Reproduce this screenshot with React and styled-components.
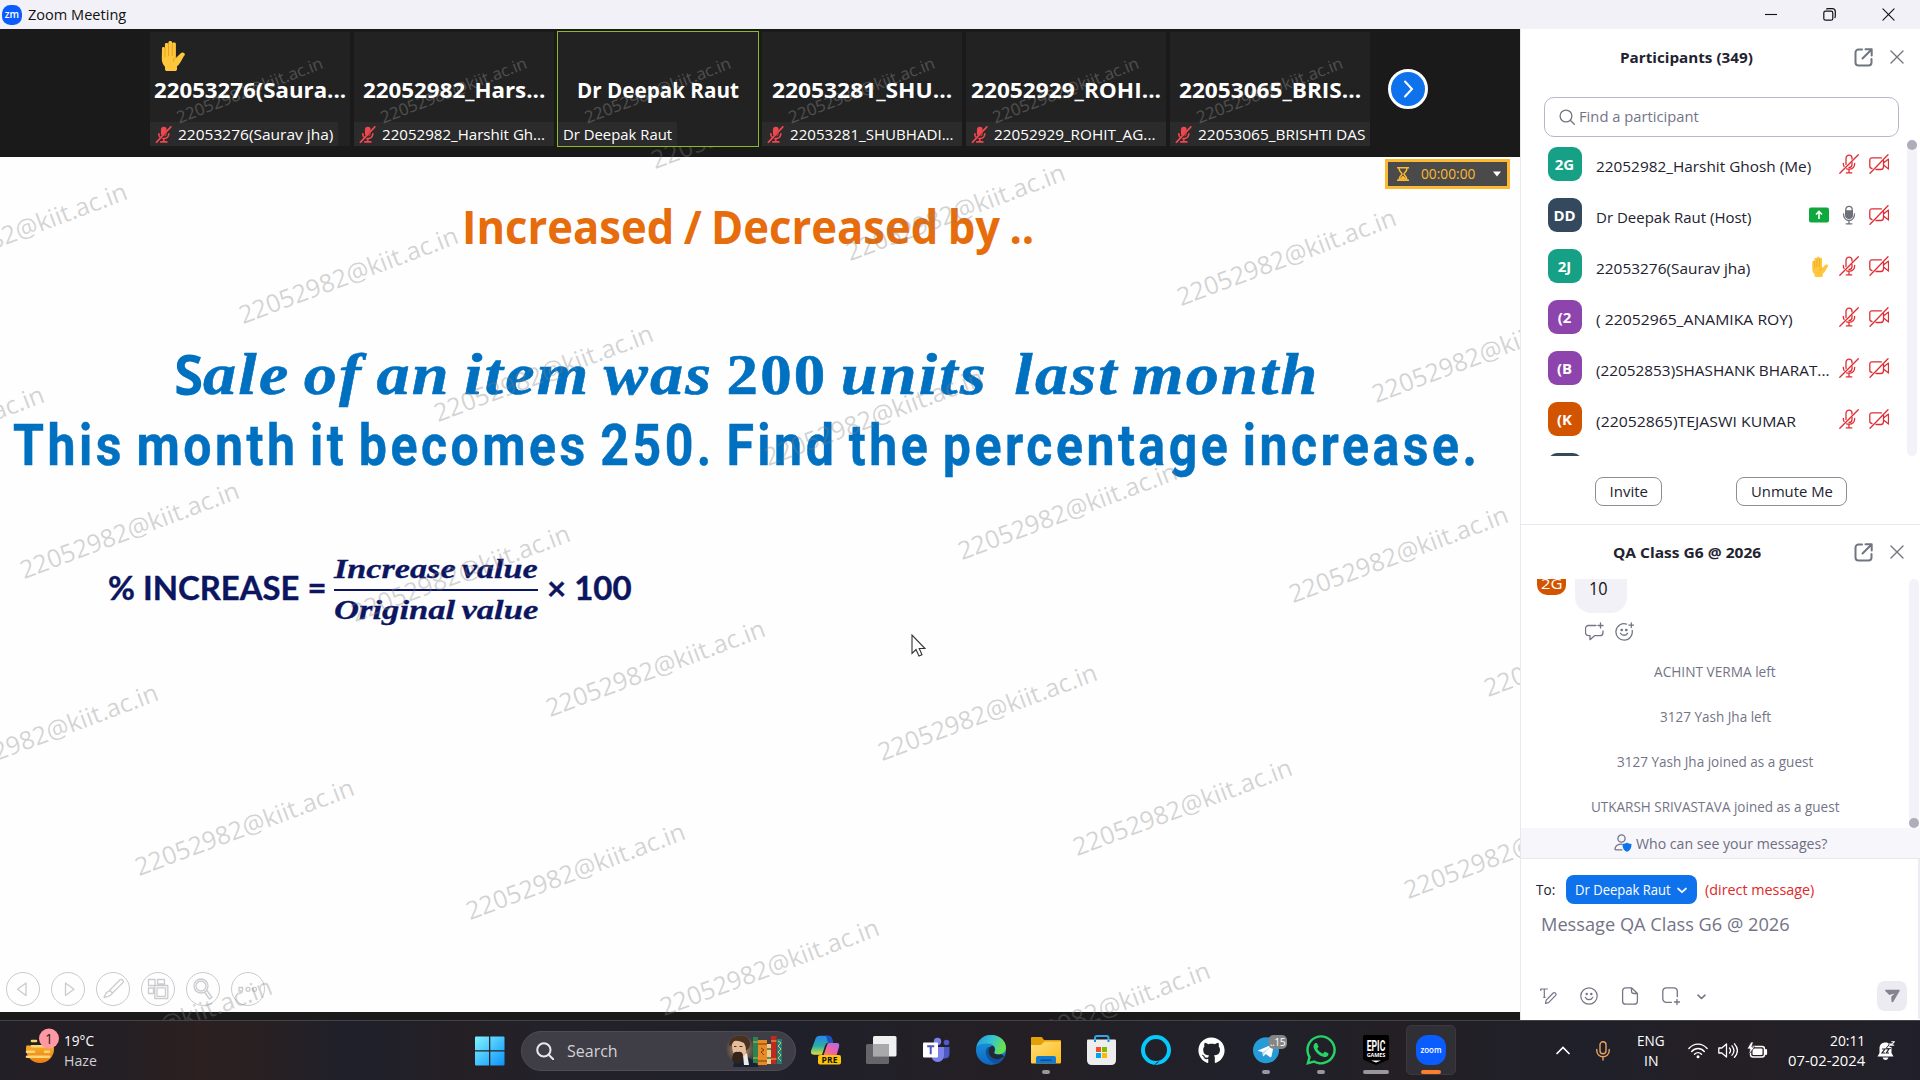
import React, { useLayoutEffect, useRef, useState } from "react";
import styled, { createGlobalStyle, css } from "styled-components";
import { FaGithub, FaWhatsapp } from "react-icons/fa";

const UI = `"Open Sans", "Noto Sans", sans-serif`;
const ACCOUNT = "22052982@kiit.ac.in";

const GlobalStyle = createGlobalStyle`
  * { box-sizing: border-box; }
  html, body { margin: 0; padding: 0; background: #1a1a1a; overflow: hidden; }
  body { font-family: ${UI}; color: #222230; }
  svg { display: block; flex: none; }
`;

/* ---------- text fitted to a fixed measure ---------- */

const FitBox = styled.span`
  display: block;
  flex: none;
  width: ${(p) => p.$w}px;
  height: ${(p) => p.$h || 20}px;
  line-height: ${(p) => p.$h || 20}px;
  font-family: ${(p) => p.$font || UI};
  font-size: ${(p) => p.$size || 15}px;
  font-weight: ${(p) => p.$weight || 400};
  font-style: ${(p) => (p.$italic ? "italic" : "normal")};
  letter-spacing: ${(p) => p.$track || 0}px;
  word-spacing: ${(p) => p.$words || 0}px;
  -webkit-text-stroke: ${(p) => (p.$stroke ? `${p.$stroke}px currentColor` : "0")};
  color: ${(p) => p.$color || "inherit"};
`;

const FitInner = styled.span`
  display: inline-block;
  white-space: pre;
  transform-origin: 0 50%;
`;

function Fit({ w, h, size, weight, italic, font, track, words, stroke, up = 0, color, children }) {
  const ref = useRef(null);
  const [scale, setScale] = useState(1);
  useLayoutEffect(() => {
    const natural = ref.current.offsetWidth - (track || 0);
    if (natural > 0) setScale(w / natural);
  }, [w, track, children]);
  return (
    <FitBox $w={w} $h={h} $size={size} $weight={weight} $italic={italic} $font={font} $track={track} $words={words} $stroke={stroke} $color={color}>
      <FitInner ref={ref} style={{ transform: `translateY(${-up}px) scaleX(${scale})` }}>{children}</FitInner>
    </FitBox>
  );
}

/* ---------- frame ---------- */

const Screen = styled.div`
  width: 1920px;
  height: 1080px;
  display: flex;
  flex-direction: column;
  overflow: hidden;
  background: #1a1a1a;
`;

const TitleBar = styled.header`
  height: 29px;
  flex: none;
  display: flex;
  align-items: center;
  background: #f3f1f8;
  color: #111;
  padding: 0 25px 0 2px;
  gap: 6px;
`;

const WindowButtons = styled.div`
  margin-left: auto;
  display: flex;
  align-items: center;
  gap: 46px;
`;

const Body = styled.div`
  height: 991px;
  flex: none;
  display: flex;
`;

const Main = styled.main`
  width: 1520px;
  flex: none;
  display: flex;
  flex-direction: column;
  position: relative;
  overflow: hidden;
`;

/* ---------- video strip ---------- */

const Strip = styled.section`
  height: 118px;
  margin-bottom: 10px;
  flex: none;
  display: flex;
  align-items: flex-start;
  padding: 3px 0 0 150px;
  background: #1a1a1a;
  gap: 4px;
  position: relative;
  z-index: 2;
`;

const Tile = styled.div`
  width: 200px;
  height: 114px;
  flex: none;
  display: flex;
  flex-direction: column;
  align-items: center;
  justify-content: flex-end;
  position: relative;
  background: #222222;
  outline: ${(p) => (p.$active ? "1px solid #86bd22" : "none")};
  color: #fff;
`;

const TileName = styled.div`
  height: 28px;
  margin-bottom: 18px;
`;

const TileLabel = styled.div`
  align-self: flex-start;
  width: ${(p) => p.$w}px;
  height: 24px;
  flex: none;
  display: flex;
  align-items: center;
  padding-left: 5px;
  gap: 6px;
  background: #2b2b2b;
`;

const TileHand = styled.div`
  position: absolute;
  left: 10px;
  top: 8px;
`;

const TileMark = styled.div`
  position: absolute;
  left: 22px;
  top: 47px;
  transform: rotate(-21deg);
  opacity: 0.2;
  pointer-events: none;
`;

const NextButton = styled.button`
  width: 40px;
  height: 40px;
  margin: 37px 0 0 14px;
  padding: 0;
  border: 3.5px solid #fff;
  border-radius: 50%;
  background: #0e72ed;
  display: flex;
  align-items: center;
  justify-content: center;
`;

/* ---------- shared slide ---------- */

const Slide = styled.section`
  height: 855px;
  flex: none;
  background: #fefefe;
  display: flex;
  flex-direction: column;
  position: relative;
`;

const Line = styled.div`
  height: ${(p) => p.$h}px;
  flex: none;
  margin-top: ${(p) => p.$top}px;
  padding-left: ${(p) => p.$left}px;
  display: flex;
  align-items: center;
`;

const Side = styled.div`
  padding-bottom: 4px;
  margin: 0 ${(p) => p.$r || 0}px 0 ${(p) => p.$l || 0}px;
`;

const Fraction = styled.div`
  display: flex;
  flex-direction: column;
  width: 204px;
`;

const FractionBar = styled.div`
  height: 2px;
  background: #0b1560;
`;

const SlideTools = styled.nav`
  margin-top: auto;
  display: flex;
  gap: 11.2px;
  padding: 0 0 6.5px 5.5px;
`;

const SlideTool = styled.span`
  width: 34px;
  height: 34px;
  border: 1.3px solid #cbcace;
  border-radius: 50%;
  display: flex;
  align-items: center;
  justify-content: center;
`;

const Timer = styled.div`
  position: absolute;
  left: 1385px;
  top: 2px;
  width: 125px;
  height: 30px;
  border: 3px solid #fdb930;
  background: #4a4a4a;
  display: flex;
  align-items: center;
  padding: 0 6px 0 9px;
  gap: 12px;
`;

const TimerArrow = styled.span`
  margin-left: auto;
`;

const WatermarkLayer = styled.div`
  position: absolute;
  inset: 0;
  overflow: hidden;
  pointer-events: none;
`;

const Watermark = styled.div`
  position: absolute;
  left: ${(p) => p.$x - 116}px;
  top: ${(p) => p.$y - 45.5}px;
  transform: rotate(-20.6deg);
  color: rgba(130, 130, 130, 0.34);
`;

const Pointer = styled.div`
  position: absolute;
  left: 911px;
  top: 605px;
`;

/* ---------- sidebar ---------- */

const Sidebar = styled.aside`
  width: 400px;
  flex: none;
  border-left: 1px solid #e9e8f0;
  background: #fff;
  display: flex;
  flex-direction: column;
`;

const PanelHead = styled.div`
  height: ${(p) => p.$h}px;
  flex: none;
  display: flex;
  align-items: center;
  padding: 0 16px 0 ${(p) => p.$left}px;
`;

const HeadActions = styled.div`
  margin-left: auto;
  display: flex;
  align-items: center;
  gap: 17px;
`;

const SearchField = styled.div`
  width: 355px;
  height: 40px;
  flex: none;
  margin: 12px 0 0 23px;
  border: 1px solid #b9b5cd;
  border-radius: 10px;
  display: flex;
  align-items: center;
  padding-left: 14px;
  gap: 4px;
`;

const Split = styled.div`
  display: flex;
  justify-content: space-between;
  flex: none;
  height: ${(p) => p.$h}px;
  margin-top: ${(p) => p.$top || 0}px;
  padding-right: ${(p) => p.$right}px;
`;

const ParticipantList = styled.div`
  width: 380px;
  padding: 7px 0 0 26.5px;
  overflow: hidden;
`;

const ParticipantRow = styled.div`
  width: 341.5px;
  height: 51px;
  display: flex;
  align-items: flex-start;
`;

const Avatar = styled.div`
  width: 34px;
  height: 34px;
  flex: none;
  border-radius: 9px;
  background: ${(p) => p.$bg};
  color: #fff;
  font-size: 15px;
  font-weight: 700;
  display: flex;
  align-items: center;
  justify-content: center;
`;

const RowName = styled.div`
  margin: 9px 0 0 14.5px;
  height: 20px;
`;

const RowIcons = styled.div`
  height: 34px;
  margin-left: auto;
  display: flex;
  align-items: center;
  gap: 10px;
`;

const Track = styled.div`
  width: 10px;
  border-radius: 5px;
  background: #f3f2f8;
  display: flex;
  flex-direction: column;
  justify-content: ${(p) => (p.$end ? "flex-end" : "flex-start")};
`;

const Thumb = styled.div`
  width: 10px;
  height: 10px;
  border-radius: 50%;
  background: #afadb9;
`;

const FooterButtons = styled.div`
  height: 69px;
  flex: none;
  display: flex;
  align-items: flex-start;
  padding: 21px 0 0 74px;
  gap: 74px;
  border-bottom: 1px solid #e9e8f0;
`;

const PillButton = styled.button`
  width: ${(p) => p.$w}px;
  height: 29px;
  padding: 0;
  border: 1px solid #8d8d92;
  border-radius: 8px;
  background: #fff;
  color: #222230;
  display: flex;
  align-items: center;
  justify-content: center;
`;

const ChatLog = styled.div`
  flex: 1;
  overflow: hidden;
  display: flex;
  flex-direction: column;
`;

const Message = styled.div`
  height: 34px;
  flex: none;
  display: flex;
  align-items: flex-end;
  padding-left: 16px;
  gap: 9px;
`;

const ChatAvatar = styled.div`
  width: 29px;
  height: 29px;
  flex: none;
  margin-bottom: 18px;
  border-radius: 10px;
  background: #d35400;
  color: #fff;
  display: flex;
  align-items: flex-end;
  justify-content: center;
  padding-bottom: 3px;
`;

const Bubble = styled.div`
  width: 52px;
  height: 60px;
  border-radius: 16px;
  background: #f2f1f7;
  color: #111;
  display: flex;
  align-items: flex-end;
  padding: 0 0 13px 13.5px;
`;

const Reactions = styled.div`
  height: 37px;
  flex: none;
  display: flex;
  align-items: center;
  padding-left: 64px;
  gap: 11px;
`;

const Notices = styled.div`
  display: flex;
  flex-direction: column;
  align-items: center;
  gap: 25px;
  padding-top: 12px;
  color: #747487;
`;

const WhoBand = styled.div`
  height: 31px;
  flex: none;
  display: flex;
  align-items: center;
  padding-left: 93px;
  gap: 4px;
  background: #f7f6fb;
  border-bottom: 1px solid #e9e8f0;
  color: #6e6e80;
`;

const Composer = styled.div`
  height: 160px;
  flex: none;
  border-right: 2px solid #edecf4;
  display: flex;
  flex-direction: column;
`;

const ToRow = styled.div`
  display: flex;
  align-items: center;
  height: 29px;
  margin-top: 16px;
  padding-left: 15px;
`;

const Recipient = styled.div`
  width: 131px;
  height: 29px;
  margin: 0 8px 0 11px;
  padding: 0 10px 0 9px;
  border-radius: 8px;
  background: #0e72ed;
  color: #fff;
  display: flex;
  align-items: center;
  justify-content: space-between;
`;

const Placeholder = styled.div`
  padding: 7px 0 0 20px;
  color: #747487;
`;

const ComposerTools = styled.div`
  display: flex;
  align-items: center;
  height: 30px;
  margin: auto 11px 8px 0;
  padding-left: 18px;
`;

const ToolSlot = styled.span`
  width: ${(p) => p.$w || 41}px;
`;

const SendButton = styled.span`
  width: 30px;
  height: 30px;
  margin-left: auto;
  border-radius: 8px;
  background: #ecebf1;
  display: flex;
  align-items: center;
  justify-content: center;
`;

/* ---------- taskbar ---------- */

const Taskbar = styled.footer`
  height: 60px;
  flex: none;
  display: flex;
  align-items: stretch;
  border-top: 1px solid #434247;
  color: #fff;
  background: linear-gradient(90deg, #231f26 0, #241f24 120px, #2c2020 200px, #272023 270px, #1f202b 350px, #241f25 460px, #23222a 560px, #20202a 800px, #241f24 1010px, #20212b 1260px, #231f24 1390px, #20202a 1600px, #241f24 1720px, #21202a 1920px);
`;

const Weather = styled.div`
  width: 475px;
  display: flex;
  align-items: center;
  padding-left: 24px;
  gap: 4px;
`;

const Stack = styled.div`
  display: flex;
  flex-direction: column;
  align-items: ${(p) => p.$align || "flex-start"};
  justify-content: center;
`;

const Start = styled.div`
  width: 46px;
  display: flex;
  align-items: center;
`;

const SearchPill = styled.div`
  width: 275px;
  height: 40px;
  align-self: center;
  border-radius: 20px;
  background: #3f3d45;
  border: 1px solid #4e4c54;
  color: #d3d2d6;
  display: flex;
  align-items: center;
  padding: 0 11px 0 14px;
`;

const SearchLabel = styled.span`
  margin-left: 13px;
`;

const SearchArt = styled.span`
  margin-left: auto;
`;

const Apps = styled.div`
  display: flex;
  padding-left: 2.5px;
`;

const AppSlot = styled.div`
  width: 55px;
  display: flex;
  flex-direction: column;
  align-items: center;
`;

const AppFace = styled.div`
  width: 50px;
  height: 50px;
  margin-top: 4px;
  border-radius: 5px;
  display: flex;
  align-items: center;
  justify-content: center;
  ${(p) => p.$active && css`
    background: #312f36;
    border: 1px solid #3b393f;
  `}
`;

const Indicator = styled.div`
  width: ${(p) => p.$w}px;
  height: 4px;
  margin-top: -5px;
  border-radius: 2px;
  background: ${(p) => p.$bg || "#98979c"};
`;

const Tray = styled.div`
  margin-left: auto;
  padding-right: 25px;
  display: flex;
  align-items: center;
`;

const TraySlot = styled.div`
  width: ${(p) => p.$w}px;
  display: flex;
  justify-content: center;
`;

/* ---------- icons ---------- */

const ZoomMark = () => (
  <svg width="20" height="20" viewBox="0 0 20 20">
    <rect width="20" height="20" rx="8.5" fill="#0b5cff" />
    <text x="10" y="13.4" fontFamily="Open Sans" fontWeight="600" fontSize="10" fill="#fff" textAnchor="middle">zm</text>
  </svg>
);

const HandIcon = ({ w = 26, h = 31 }) => (
  <svg width={w} height={h} viewBox="0 0 26 31" preserveAspectRatio="none">
    <path d="M2 8.2c0-1.6 2.8-1.6 2.9 0V4.4c0-1.8 3.4-1.8 3.5 0V2.5c0-2 3.7-2 3.8 0v1.4c.1-1.9 3.6-1.9 3.7 0V18l4.6-4.6c1.7-1.7 4.9-.6 4.3 1.6-2.8 3.2-3.9 8.500-7.800 11.300v2.900c0 1-.9 1.800-2 1.800H7c-1.200 0-2-.8-2-1.800v-2.400C2.800 24.600 1.700 22 1.800 18Z" fill="#ffc63c" />
    <path d="M5 8v8.500M8.500 4.500v11M12.200 4.500v11.200M15.900 17c-1.700.8-2.600 2.200-2.700 4.200" stroke="#e6a01f" strokeWidth="1" fill="none" strokeLinecap="round" />
  </svg>
);

const TileMicOff = () => (
  <svg width="17" height="17" viewBox="0 0 17 17" fill="none" stroke="#f0474f" strokeLinecap="round">
    <rect x="5.900" y=".8" width="5.800" height="9.400" rx="2.900" fill="#f0474f" stroke="none" />
    <path d="M3.800 7.800c0 6.400 10 6.400 10 0M8.800 12.600V15.600M5.800 15.900h6" strokeWidth="1.700" />
    <path d="M15.200 1.600 2.600 16.400" stroke="#2b2b2b" strokeWidth="2" />
    <path d="M15.800.8 1.400 16.300" strokeWidth="1.700" />
  </svg>
);

const MicOff = () => (
  <svg width="20" height="20" viewBox="0 0 20 20" fill="none" stroke="#e02d33" strokeWidth="1.300" strokeLinecap="round">
    <path d="M7 10.500V4.200c0-4 6-4 6 0v.8M13 8.500v2c0 2-1.400 3-3 3" />
    <path d="M4.300 9.300c0 1.300.2 2.300.8 3.200M15.700 9.300c0 4-2.700 5.900-5.700 5.900-.9 0-1.700-.1-2.400-.4M10 15.200v3.500M7.300 18.900h5.500" />
    <path d="M.8 19.200 19.300.8" />
  </svg>
);

const MicOn = () => (
  <svg width="20" height="20" viewBox="0 0 20 20" fill="none" stroke="#6e7079" strokeWidth="1.300" strokeLinecap="round">
    <rect x="6.800" y="1.300" width="6.400" height="12" rx="3.200" />
    <path d="M6.800 6h6.400v4.100a3.200 3.200 0 0 1-6.400 0Z" fill="#6e7079" />
    <path d="M4.500 8.800c0 8.900 11 8.900 11 0M10 15.500v3M7.200 18.800h5.600" />
  </svg>
);

const CamOff = () => (
  <svg width="20" height="20" viewBox="0 0 20 20" fill="none" stroke="#e02d33" strokeWidth="1.300" strokeLinecap="round" strokeLinejoin="round">
    <path d="M3 14.500C1.200 14.300.8 13.600.8 12.300V6C.8 4.500 1.500 3.800 3 3.800h9.500M14.500 6.500v6c0 2-.8 3-2.600 3H7M14.500 9l5-3.900v9.900l-5-3.900" />
    <path d="M1 19.300 19 .8" />
  </svg>
);

const ShareBadge = () => (
  <svg width="20" height="20" viewBox="0 0 20 20">
    <rect y="2.500" width="20" height="15" rx="2" fill="#0fa83c" />
    <path d="M10 14V7M7 9.500l3-3 3 3" stroke="#fff" strokeWidth="1.600" fill="none" />
  </svg>
);

const PopOut = () => (
  <svg width="19" height="19" viewBox="0 0 19 19" fill="none" stroke="#6f7680" strokeWidth="2" strokeLinecap="round" strokeLinejoin="round">
    <path d="M8 1.500H4.500a3 3 0 0 0-3 3v10a3 3 0 0 0 3 3h10a3 3 0 0 0 3-3V11M11.500 1.300h6.200v6.200M17.300 1.700 8.500 10.500" />
  </svg>
);

const Cross = ({ s = 14, c = "#74747f", sw = 1.4 }) => (
  <svg width={s} height={s} viewBox="0 0 14 14" fill="none" stroke={c} strokeWidth={sw} strokeLinecap="round">
    <path d="m1 1 12 12M13 1 1 13" />
  </svg>
);

const Glass = ({ s = 16, c = "#74747f", sw = 1.300 }) => (
  <svg width={s} height={s} viewBox="0 0 16 16" fill="none" stroke={c} strokeWidth={sw} strokeLinecap="round">
    <circle cx="7" cy="7" r="5.900" />
    <path d="m11.300 11.300 4 4" />
  </svg>
);

const ChevronDown = ({ w = 9, c = "#747487" }) => (
  <svg width={w} height={w} viewBox="0 0 9 9" fill="none" stroke={c} strokeWidth="1.600" strokeLinecap="round" strokeLinejoin="round">
    <path d="m1 3.200 3.500 3.300L8 3.200" />
  </svg>
);

const ReplyPlus = () => (
  <svg width="19" height="19" viewBox="0 0 19 19" fill="none" stroke="#747487" strokeWidth="1.300" strokeLinecap="round" strokeLinejoin="round">
    <path d="M11 3.500H3.500a3 3 0 0 0-3 3v4.200a3 3 0 0 0 3 3H5v4l4.500-4H15a3 3 0 0 0 3-3V9M15.500 1v5M13 3.500h5" />
  </svg>
);

const SmilePlus = () => (
  <svg width="19" height="19" viewBox="0 0 19 19" fill="none" stroke="#747487" strokeWidth="1.300" strokeLinecap="round">
    <path d="M11.500 2.100a8.200 8.200 0 1 0 5.700 6.400M5.500 11.300c1.500 2.600 5.400 2.600 7 0M16.300.8v4.800M13.900 3.200h4.800" />
    <circle cx="6.700" cy="8" r=".7" fill="#747487" />
    <circle cx="11.300" cy="8" r=".7" fill="#747487" />
  </svg>
);

const WhoIcon = () => (
  <svg width="18" height="18" viewBox="0 0 18 18" fill="none" stroke="#747487" strokeWidth="1.300" strokeLinecap="round">
    <circle cx="7.500" cy="4.500" r="3.600" />
    <path d="M8 10.200c-4 0-6.500 1.300-7 4.600-.1.700.3 1 .9 1H8" />
    <path d="M13 8.500c1.300 1 2.700 1.400 4.500 1.400 0 3.800-1 6.300-4.500 7.900-3.500-1.600-4.500-4.100-4.500-7.900 1.800 0 3.200-.4 4.500-1.400Z" fill="#0e72ed" stroke="none" />
  </svg>
);

const FormatIcon = () => (
  <svg width="18" height="18" viewBox="0 0 18 18" fill="none" stroke="#747487" strokeWidth="1.200" strokeLinejoin="round">
    <path d="M1.800 4V2h7M5.300 2v8M4.300 10.300h2.200M6.500 16.500l.7-3.300 7-7.200c1.600-1.300 3.700.7 2.400 2.400l-7 7.200Z" />
  </svg>
);

const SmileIcon = () => (
  <svg width="18" height="18" viewBox="0 0 18 18" fill="none" stroke="#747487" strokeWidth="1.200" strokeLinecap="round">
    <circle cx="9" cy="9" r="8.200" />
    <path d="M5.300 10.300c1.500 3.200 6 3.200 7.500 0" />
    <circle cx="6.700" cy="7" r=".6" fill="#747487" />
    <circle cx="11.300" cy="7" r=".6" fill="#747487" />
  </svg>
);

const FileIcon = () => (
  <svg width="18" height="18" viewBox="0 0 18 18" fill="none" stroke="#747487" strokeWidth="1.300" strokeLinejoin="round">
    <path d="M10.500.8H4.600a3 3 0 0 0-3 3v10.400a3 3 0 0 0 3 3h8.800a3 3 0 0 0 3-3V6.500Zm0 0v3.200c0 1.700.8 2.500 2.500 2.500h3.400" />
  </svg>
);

const ShotIcon = () => (
  <svg width="18" height="18" viewBox="0 0 18 18" fill="none" stroke="#747487" strokeWidth="1.300" strokeLinecap="round">
    <path d="M9.500 15.300H4.300a3.500 3.500 0 0 1-3.500-3.500V4.300A3.500 3.500 0 0 1 4.300.8h7.500a3.500 3.500 0 0 1 3.500 3.500v5.400M15 12.500v5M12.500 15h5" />
  </svg>
);

const SendIcon = () => (
  <svg width="15" height="14" viewBox="0 0 15 14">
    <path d="M.5.800h13.800c.5 0 .7.500.4 1L8.300 12.700c-.5.800-1.700.7-1.800-.3L6.200 7.700 9.500 4.600 4.300 6 .3 1.900C-.1 1.400 0 .8.500.8Z" fill="#85838f" />
  </svg>
);

const HazeIcon = () => (
  <svg width="36" height="46" viewBox="0 0 36 46">
    <defs>
      <linearGradient id="sun" x1="0" y1="0" x2="0" y2="1"><stop offset="0" stopColor="#f9c63c" /><stop offset="1" stopColor="#ee7e14" /></linearGradient>
    </defs>
    <circle cx="16" cy="21" r="14" fill="url(#sun)" />
    <path d="M0 0h30v17.500H0Z" fill="#241f25" />
    <path d="M8 13h4M8 18.300h20M3 23.800h7M21 23.800h4M3 28.800h22" stroke="#f8d774" strokeWidth="2.600" strokeLinecap="round" />
    <circle cx="25" cy="10.500" r="10" fill="#ff98a2" />
    <text x="25" y="15.500" fontFamily="Open Sans" fontSize="14" fill="#222" textAnchor="middle">1</text>
  </svg>
);

const WindowsLogo = () => (
  <svg width="30" height="30" viewBox="0 0 30 30">
    <defs><linearGradient id="win" x1="0" y1="0" x2="1" y2="1"><stop offset="0" stopColor="#7ff3ff" /><stop offset="1" stopColor="#0b93fb" /></linearGradient></defs>
    <path d="M0 1.500Q0 .5 1 .5H14V14.300H0ZM15.300.5H28.500q1 0 1 1V14.300H15.300ZM0 15.600H14V29.500H1q-1 0-1-1ZM15.300 15.600H29.500V28.500q0 1-1 1H15.300Z" fill="url(#win)" />
  </svg>
);

const DickensArt = () => (
  <svg width="58" height="32" viewBox="0 0 58 32">
    <defs><radialGradient id="halo"><stop offset=".5" stopColor="#8a6c52" /><stop offset="1" stopColor="#8a6c52" stopOpacity="0" /></radialGradient></defs>
    <circle cx="14.500" cy="14" r="15" fill="url(#halo)" />
    <path d="M7 32q1-8 9-12 11 3 17 12Z" fill="#182133" />
    <path d="m17 20 4-2 2 12h-5Z" fill="#edebe6" />
    <path d="M6 9q3-7 11-6 6 3 5 9l-3 8q-4 4-8 3-5-4-5-14Z" fill="#e5bd9b" />
    <path d="M3 9q1-7 9-8 8-1 11 4 2 4 0 8l-3 3q0-5-2-8-6-3-10-2-2 2-3 5-2 0-2-2Z" fill="#49301f" />
    <path d="M7 19q2-3 5-2 4-1 5 3 0 6-4 9-6 0-7-5Z" fill="#33231a" />
    <path d="M8 11.500h2.500M13.500 11.500h3" stroke="#49301f" strokeWidth="1.200" />
    <rect x="27" y="2" width="5" height="26" fill="#2b8350" />
    <path d="M27 7h5M27 23h5" stroke="#d8b44a" />
    <rect x="32" y="5" width="9" height="25" fill="#e98a24" />
    <path d="M32 9h9M32 26h9M35 13l3 2-3 2 3 3" stroke="#7e3a10" fill="none" />
    <rect x="41" y="9" width="4" height="20" fill="#e8cf90" />
    <path d="M41 14h4M41 23h4" stroke="#2b7750" strokeWidth="1.500" />
    <rect x="45" y="1" width="5.500" height="28" fill="#c2291d" />
    <path d="M45 6h5.500M45 24h5.500" stroke="#f0b650" strokeWidth="1.200" />
    <path d="M53.500 4v25" stroke="#1d7d78" strokeWidth="5" />
    <path d="m52 6 3 2-3 3 3 3-3 3 3 3-3 3 3 3" stroke="#dbbd62" fill="none" />
  </svg>
);

const CopilotIcon = () => (
  <svg width="30" height="30" viewBox="0 0 30 30">
    <defs>
      <linearGradient id="cpa" x1="0" y1="0" x2="0" y2="1"><stop offset="0" stopColor="#2b83ee" /><stop offset=".55" stopColor="#27b0a3" /><stop offset="1" stopColor="#e6dc3c" /></linearGradient>
      <linearGradient id="cpb" x1="1" y1="0" x2="0" y2="1"><stop offset="0" stopColor="#a66cf0" /><stop offset=".5" stopColor="#ee62a9" /><stop offset="1" stopColor="#fa8a4d" /></linearGradient>
    </defs>
    <path d="M5 2.500Q6 .7 9 .7h8q3 0 4 3l1 4h-5q-2 0-3 3l-3 9H3q-4 0-3-4Z" fill="url(#cpa)" />
    <path d="M15 .7h3q2 0 3 3l1 4h-5Z" fill="#1555bd" />
    <path d="M18 8h8q3 0 2 4l-3 10H12l4-12q.5-2 2-2Z" fill="url(#cpb)" />
    <rect x="7" y="20" width="23" height="9.500" rx="2" fill="#fdc50a" />
    <text x="18.500" y="28" fontFamily="Open Sans" fontWeight="700" fontSize="8.500" fill="#111" textAnchor="middle" textLength="16">PRE</text>
  </svg>
);

const TaskViewIcon = () => (
  <svg width="31" height="30" viewBox="0 0 31 30">
    <rect x="7" y="1" width="23.500" height="20.500" rx="1.500" fill="#f0f0f1" />
    <rect x="0" y="9" width="23" height="20" rx="1.500" fill="#707073" opacity=".88" />
    <rect x="7" y="9" width="16" height="12.500" fill="#a9a9ab" />
  </svg>
);

const TeamsIcon = () => (
  <svg width="27" height="26" viewBox="0 0 27 26">
    <circle cx="14.500" cy="4.500" r="3.700" fill="#7b83eb" />
    <circle cx="23.500" cy="5.500" r="2.800" fill="#5059c9" />
    <path d="M18 10h8.500v7q0 4-4.500 4.500h-4Z" fill="#5059c9" />
    <path d="M9 10h12v9q-1 6-7 6-4-.5-5-4Z" fill="#7b83eb" />
    <rect x="0" y="5.500" width="15" height="15" rx="1" fill="#fff" />
    <path d="M4.200 9.300h7M7.700 9.300v8" stroke="#4b53bc" strokeWidth="2" />
  </svg>
);

const EdgeIcon = () => (
  <svg width="30" height="30" viewBox="0 0 30 30">
    <defs>
      <linearGradient id="ea" x1="0" y1="0" x2="1" y2=".3"><stop offset="0" stopColor="#1e9be2" /><stop offset=".55" stopColor="#35c3cf" /><stop offset="1" stopColor="#6be04f" /></linearGradient>
      <linearGradient id="eb" x1="0" y1="0" x2="0" y2="1"><stop offset="0" stopColor="#1b9de2" /><stop offset="1" stopColor="#0f66bf" /></linearGradient>
    </defs>
    <circle cx="15" cy="15" r="15" fill="url(#eb)" />
    <path d="M.4 12C2 4.500 8 0 15 0c9 0 15 6 15 12.500 0 4-3 6.800-7.200 6.800-3.300 0-5.200-1-4.500-2.300 2.800-4-1-8.500-6.300-8.500C7 8 2.500 9 .4 12Z" fill="url(#ea)" />
    <path d="M12 12q-4 4-1 10 4 6 10 7 5-2 7-6.500-5 2.500-10 1-5-2-5.500-6.500-.5-3 1.500-5Z" fill="#11529c" />
    <path d="M18.300 17c1.200-2 .7-4.500-1.300-6.300-3 0-4.800 3-4.500 6.300.5 3.500 3 6 6.500 7 4 .5 7-.5 9.300-2.700l-3-2.300c-4 1.300-8 0-7-2Z" fill="#241f26" opacity=".9" />
  </svg>
);

const ExplorerIcon = () => (
  <svg width="30" height="28" viewBox="0 0 30 28">
    <defs><linearGradient id="fo" x1="0" y1="0" x2="1" y2="1"><stop offset="0" stopColor="#ffdf79" /><stop offset="1" stopColor="#fcba1c" /></linearGradient></defs>
    <path d="M0 2Q0 1 1 1h9q1 0 1.500.7L13 4h16q1 0 1 1v6H0Z" fill="#e3a008" />
    <path d="M0 9h10l3.500-3.500H30V26.500q0 1-1 1H1q-1 0-1-1Z" fill="url(#fo)" />
    <path d="M5 27.500V22q0-2 2-2h16q2 0 2 2v5.500Z" fill="#1179cf" />
    <path d="M10 24.300h10" stroke="#0a4f94" strokeWidth="1.600" strokeLinecap="round" />
  </svg>
);

const StoreIcon = () => (
  <svg width="29" height="30" viewBox="0 0 29 30">
    <path d="M8 7V3q0-2 2-2h9.500q2 0 2 2v4" fill="none" stroke="#29a9ea" strokeWidth="2" />
    <path d="M0 5.500q0-1 1-1h27q1 0 1 1V25q0 5-5 5H5q-5 0-5-5Z" fill="#ededee" />
    <rect x="9" y="12" width="5" height="5" fill="#f25022" /><rect x="15" y="12" width="5" height="5" fill="#7fba00" />
    <rect x="9" y="18" width="5" height="5" fill="#00a4ef" /><rect x="15" y="18" width="5" height="5" fill="#ffb900" />
    <path d="M8 4.500v2.500M21.500 4.500v2.500" stroke="#1688c9" strokeWidth="2" />
  </svg>
);

const AlexaIcon = () => (
  <svg width="30" height="30" viewBox="0 0 30 30">
    <circle cx="15" cy="15" r="13" fill="none" stroke="#05c8fd" strokeWidth="4" />
    <path d="M12.500 30V26.500q1.500.8 5 0L13.500 30Z" fill="#05c8fd" />
    <path d="M13.500 30q1-1.500 4-3.200" stroke="#241f26" strokeWidth="1" fill="none" />
  </svg>
);

const TelegramIcon = () => (
  <svg width="44" height="30" viewBox="0 0 44 30">
    <circle cx="22" cy="15.300" r="13" fill="#259bd8" />
    <path d="m13.500 15.800 15-6.500q1.500-.5 1.300 1L27.500 21.300q-.4 1.500-1.700.6l-4-3-2 2q-1 .8-1-.6l-.5-3.300Z" fill="#fff" />
    <path d="m18.500 17.300 8-5.500-6 6-.6 3Z" fill="#b9d8ee" />
    <rect x="24.500" y="0" width="18.500" height="14" rx="5" fill="#858587" />
    <text x="33.800" y="11" fontFamily="Open Sans" fontSize="10.500" fill="#fff" textAnchor="middle" textLength="16">..15</text>
  </svg>
);

const EpicIcon = () => (
  <svg width="26" height="30" viewBox="0 0 26 30">
    <path d="M0 1.500Q0 0 1.500 0h23Q26 0 26 1.500V24.500L13 30 0 24.500Z" fill="#000" />
    <text x="13" y="15.500" fontFamily="Roboto" fontWeight="700" fontSize="15" fill="#fff" textAnchor="middle" textLength="18.500" lengthAdjust="spacingAndGlyphs">EPIC</text>
    <text x="13" y="22" fontFamily="Open Sans" fontWeight="700" fontSize="5.500" fill="#fff" textAnchor="middle" textLength="18.500">GAMES</text>
    <path d="M8 25.500h10l-5 2Z" fill="#fff" />
  </svg>
);

const ZoomApp = () => (
  <svg width="30" height="30" viewBox="0 0 30 30">
    <rect width="30" height="30" rx="12" fill="#0b5cff" />
    <text x="15" y="17.800" fontFamily="Open Sans" fontWeight="600" fontSize="8.500" fill="#fff" textAnchor="middle" textLength="21" lengthAdjust="spacingAndGlyphs">zoom</text>
  </svg>
);

const TrayMic = () => (
  <svg width="14" height="20" viewBox="0 0 14 20" fill="none" stroke="#e6a261" strokeWidth="1.400" strokeLinecap="round">
    <rect x="4" y=".8" width="6" height="12" rx="3" />
    <path d="M.8 8.500v1.300c0 3.400 2.800 6 6.200 6s6.200-2.600 6.200-6V8.500M7 16v3" />
  </svg>
);

const Wifi = () => (
  <svg width="20" height="16" viewBox="0 0 20 16" fill="none" stroke="#fff" strokeWidth="1.400" strokeLinecap="round">
    <path d="M.9 5.500c5-5.900 13.200-5.900 18.200 0M3.700 8.500c3.500-4 9.100-4 12.600 0M6.500 11.300c2-2.200 5-2.200 7 0" />
    <circle cx="10" cy="13.800" r="1.500" fill="#fff" stroke="none" />
  </svg>
);

const Volume = () => (
  <svg width="20" height="17" viewBox="0 0 20 17" fill="none" stroke="#fff" strokeWidth="1.300" strokeLinecap="round" strokeLinejoin="round">
    <path d="M.8 6v5h3L8.500 15V2L3.800 6ZM11.500 6c1.300 1.600 1.300 3.500 0 5M14 3.800c2.500 3 2.500 6.500 0 9.400M16.500 1.800c3.600 4.200 3.600 9.300 0 13.400" />
  </svg>
);

const Battery = () => (
  <svg width="21" height="18" viewBox="0 0 21 18">
    <rect x="3.500" y="4.500" width="14" height="10.500" rx="2.500" fill="none" stroke="#fff" strokeWidth="1.400" />
    <rect x="5.500" y="6.500" width="10" height="6.500" rx="1" fill="#fff" />
    <path d="M19 8v4" stroke="#fff" strokeWidth="2.200" strokeLinecap="round" />
    <path d="M4 0 0 7h3l-1.500 5.500L8 5H4.800L6.500 0Z" fill="#fff" stroke="#22202a" strokeWidth=".8" />
  </svg>
);

const BellZ = () => (
  <svg width="18" height="20" viewBox="0 0 18 20">
    <path d="M2.500 7.500C2.500 3.500 5 1.500 8.500 1.500S14.500 3.500 14.500 7.500V12l2 3.500H.5l2-3.500Z" fill="#fff" />
    <path d="M5.500 16.500h6q-1 2.500-3 2.500t-3-2.500Z" fill="#fff" />
    <path d="M5 8h3l-3 4h3M9.300 8h2.700l-2.700 4H12" fill="none" stroke="#24222a" strokeWidth="1.200" />
    <path d="M11 3h3l-3 3.500h3M14.300.8h2.900l-2.900 3.400h2.900" fill="none" stroke="#24222a" strokeWidth="2.600" />
    <path d="M11 3h3l-3 3.500h3M14.300.8h2.900l-2.900 3.400h2.900" fill="none" stroke="#fff" strokeWidth="1.100" />
  </svg>
);

const slideStroke = { fill: "none", stroke: "#cbcace", strokeWidth: 1.3, strokeLinejoin: "round" };
const SLIDE_TOOLS = [
  <svg key="prev" width="22" height="22" viewBox="0 0 22 22" {...slideStroke}><path d="M14 5v12.500L5.500 11.300Z" /></svg>,
  <svg key="next" width="22" height="22" viewBox="0 0 22 22" {...slideStroke}><path d="M8.500 5v12.500L17 11.300Z" /></svg>,
  <svg key="pen" width="22" height="22" viewBox="0 0 22 22" {...slideStroke}><path d="M7.500 12.500 18 1.800c1.800-1 4 .8 3 2.800L10.500 15ZM7.500 12.500l3 2.500c-1.500 3-4.500 3.800-8.500 4.500l2-4.500Z" /></svg>,
  <svg key="grid" width="22" height="22" viewBox="0 0 22 22" {...slideStroke}><path d="M1.500 1.500H8v6H1.500ZM10.500 1.500h7V6h-7ZM1.500 10h5v5.500h-5ZM7.800 7.500h13V20.500h-13ZM10 9.800h8.500v8.500H10Z" /></svg>,
  <svg key="zoom" width="22" height="22" viewBox="0 0 22 22" {...slideStroke}><circle cx="9" cy="8" r="7" /><circle cx="9" cy="8" r="5" /><path d="m12.500 14 5 7 2.500-1.500-5-7" /></svg>,
  <svg key="more" width="22" height="22" viewBox="0 0 22 22" {...slideStroke}><rect x="2" y="9.500" width="3.500" height="3.500" /><circle cx="11" cy="11.300" r="2" /><circle cx="17.500" cy="11.300" r="2" /></svg>,
];

/* ---------- data ---------- */

const TILES = [
  { name: "22053276(Saura...", nameW: 192, label: "22053276(Saurav jha)", labelW: 155, box: 188, hand: true },
  { name: "22052982_Hars...", nameW: 182, label: "22052982_Harshit Gh...", labelW: 163, box: 200 },
  { name: "Dr Deepak Raut", nameW: 162, label: "Dr Deepak Raut", labelW: 109, box: 119, plain: true, active: true },
  { name: "22053281_SHU...", nameW: 180, label: "22053281_SHUBHADI...", labelW: 164, box: 200 },
  { name: "22052929_ROHI...", nameW: 190, label: "22052929_ROHIT_AG...", labelW: 161, box: 200 },
  { name: "22053065_BRIS...", nameW: 182, label: "22053065_BRISHTI DAS", labelW: 168, box: 200 },
];

const PEOPLE = [
  { init: "2G", bg: "#16a085", name: "22052982_Harshit Ghosh (Me)", w: 215 },
  { init: "DD", bg: "#34495e", name: "Dr Deepak Raut (Host)", w: 155, host: true },
  { init: "2J", bg: "#16a085", name: "22053276(Saurav jha)", w: 154, hand: true },
  { init: "(2", bg: "#8e44ad", name: "( 22052965_ANAMIKA ROY)", w: 197 },
  { init: "(B", bg: "#8e44ad", name: "(22052853)SHASHANK BHARAT...", w: 233 },
  { init: "(K", bg: "#d35400", name: "(22052865)TEJASWI KUMAR", w: 200 },
];

const NOTICES = [
  ["ACHINT VERMA left", 122],
  ["3127 Yash Jha left", 111],
  ["3127 Yash Jha joined as a guest", 196],
  ["UTKARSH SRIVASTAVA joined as a guest", 248],
];

const MARKS = [
  [760, 118], [955, 210], [1286, 255], [1481, 352],
  [17, 229], [348, 273], [543, 371], [873, 415], [1067, 509], [1398, 552], [1593, 646],
  [-66, 432], [129, 528], [460, 571], [655, 666], [987, 710], [1182, 805], [1513, 848],
  [48, 730], [244, 825], [575, 869], [769, 965], [1100, 1008],
  [162, 1024],
];

const APPS = [
  { icon: <CopilotIcon /> },
  { icon: <TaskViewIcon /> },
  { icon: <TeamsIcon /> },
  { icon: <EdgeIcon /> },
  { icon: <ExplorerIcon />, bar: 8 },
  { icon: <StoreIcon /> },
  { icon: <AlexaIcon /> },
  { icon: <FaGithub size={27} color="#fff" /> },
  { icon: <TelegramIcon />, bar: 8 },
  { icon: <FaWhatsapp size={34} color="#25d366" />, bar: 8 },
  { icon: <EpicIcon />, bar: 26 },
  { icon: <ZoomApp />, bar: 20, barBg: "#fd7e2d", active: true },
];

/* ---------- page ---------- */

export default function App() {
  return (
    <Screen>
      <GlobalStyle />
      <TitleBar>
        <ZoomMark />
        <Fit w={98} size={15} up={1}>Zoom Meeting</Fit>
        <WindowButtons>
          <svg width="12" height="12" viewBox="0 0 12 12"><path d="M0 5.500h12" stroke="#111" strokeWidth="1.100" /></svg>
          <svg width="13" height="13" viewBox="0 0 13 13" fill="none" stroke="#111" strokeWidth="1.200">
            <rect x=".8" y="3.200" width="9" height="9" rx="1.800" />
            <path d="M3.200 1.200Q4 .7 5 .7h4.300q3 0 3 3V8q0 1.200-.7 2" />
          </svg>
          <Cross s={13} c="#111" sw={1.200} />
        </WindowButtons>
      </TitleBar>

      <Body>
        <Main>
          <Strip>
            {TILES.map((t) => (
              <Tile key={t.label} $active={t.active}>
                {t.hand && <TileHand><HandIcon /></TileHand>}
                <TileName><Fit w={t.nameW} h={28} size={20.5} weight={700} up={0.5}>{t.name}</Fit></TileName>
                <TileMark><Fit w={155} h={22} size={16.500} color="#fff">{ACCOUNT}</Fit></TileMark>
                <TileLabel $w={t.box}>
                  {!t.plain && <TileMicOff />}
                  <Fit w={t.labelW} size={15} up={0.5}>{t.label}</Fit>
                </TileLabel>
              </Tile>
            ))}
            <NextButton>
              <svg width="12" height="18" viewBox="0 0 12 18" fill="none" stroke="#fff" strokeWidth="2" strokeLinecap="round"><path d="m3 1.500 7 7.500-7 7.500" /></svg>
            </NextButton>
          </Strip>

          <Slide>
            <Line $h={71} $top={33} $left={462}>
              <Fit w={572} h={71} size={46} weight={700} words={-2} up={-0.5} color="#e66c0c">Increased / Decreased by ..</Fit>
            </Line>
            <Line $h={70} $top={78} $left={174}>
              <Fit w={29} h={70} size={55} weight={700} color="#0070c0">S</Fit>
              <Fit w={1114} h={70} size={60} weight={700} italic track={2} words={-5} stroke={0.6} font={`"Liberation Serif", serif`} color="#0070c0">
                ale of an item was <Upright>200</Upright> units  last month
              </Fit>
            </Line>
            <Line $h={70} $top={2} $left={13}>
              <Fit w={1464} h={70} size={57} weight={700} track={4} words={-5} stroke={0.5} font="Roboto, sans-serif" color="#0070c0">
                This month it becomes 250. Find the percentage increase.
              </Fit>
            </Line>
            <Line $h={80} $top={68} $left={108}>
              <Side $r={8}><Fit w={218} h={40} size={33} weight={700} stroke={0.4} font="Lato, sans-serif" color="#0b1560">% INCREASE =</Fit></Side>
              <Fraction>
                <Fit w={204} h={40} size={28} weight={700} italic words={-2} stroke={0.3} font={`"Liberation Serif", serif`} color="#0b1560">Increase value</Fit>
                <FractionBar />
                <Fit w={204} h={38} size={28} weight={700} italic words={-2} stroke={0.3} font={`"Liberation Serif", serif`} color="#0b1560">Original value</Fit>
              </Fraction>
              <Side $l={9}><Fit w={85} h={40} size={33} weight={700} stroke={0.4} font="Lato, sans-serif" color="#0b1560">× 100</Fit></Side>
            </Line>
            <SlideTools>
              {SLIDE_TOOLS.map((icon) => <SlideTool key={icon.key}>{icon}</SlideTool>)}
            </SlideTools>
            <Timer>
              <svg width="12" height="14" viewBox="0 0 12 14" fill="none" stroke="#fdb930" strokeWidth="1.500">
                <path d="M0 .8h12M0 13.200h12M2 1c0 4 3 4.500 3 6s-3 2-3 6M10 1c0 4-3 4.500-3 6s3 2 3 6" />
                <path d="M3.500 12 6 9.500 8.500 12Z" fill="#fdb930" />
              </svg>
              <Fit w={54} size={14}  color="#fdb930">00:00:00</Fit>
              <TimerArrow>
                <svg width="8" height="6" viewBox="0 0 8 6"><path d="M0 .5h8L4 5.500Z" fill="#fff" /></svg>
              </TimerArrow>
            </Timer>
          </Slide>

          <WatermarkLayer>
            {MARKS.map(([x, y]) => (
              <Watermark key={`${x}-${y}`} $x={x} $y={y}>
                <Fit w={232} h={34} size={25}>{ACCOUNT}</Fit>
              </Watermark>
            ))}
          </WatermarkLayer>
          <Pointer>
            <svg width="15" height="23" viewBox="0 0 15 23"><path d="M1 1v18.500l4-4 3 6.500 3-1.300L8.200 14.500h5.800Z" fill="#fff" stroke="#333" strokeWidth="1.100" /></svg>
          </Pointer>
        </Main>

        <Sidebar>
          <PanelHead $h={56} $left={99}>
            <Fit w={133} size={15} weight={700}>Participants (349)</Fit>
            <HeadActions><PopOut /><Cross /></HeadActions>
          </PanelHead>
          <SearchField>
            <Glass />
            <Fit w={120} size={15} up={1} color="#747487">Find a participant</Fit>
          </SearchField>
          <Split $h={316} $top={3} $right={3}>
            <ParticipantList>
              {PEOPLE.map((p) => (
                <ParticipantRow key={p.name}>
                  <Avatar $bg={p.bg}>{p.init}</Avatar>
                  <RowName><Fit w={p.w} size={15} up={0.5}>{p.name}</Fit></RowName>
                  <RowIcons>
                    {p.host && <ShareBadge />}
                    {p.hand && <HandIcon w={18} h={21} />}
                    {p.host ? <MicOn /> : <MicOff />}
                    <CamOff />
                  </RowIcons>
                </ParticipantRow>
              ))}
              <ParticipantRow><Avatar $bg="#34495e" /></ParticipantRow>
            </ParticipantList>
            <Track><Thumb /></Track>
          </Split>
          <FooterButtons>
            <PillButton $w={67}><Fit w={38} size={15} up={1}>Invite</Fit></PillButton>
            <PillButton $w={111}><Fit w={82} size={15} up={1}>Unmute Me</Fit></PillButton>
          </FooterButtons>

          <PanelHead $h={54} $left={92}>
            <Fit w={148} size={15} weight={700}>QA Class G6 @ 2026</Fit>
            <HeadActions><PopOut /><Cross /></HeadActions>
          </PanelHead>
          <Split $h={249} $right={1}>
            <ChatLog>
              <Message>
                <ChatAvatar><Fit w={21} h={18} size={15}>2G</Fit></ChatAvatar>
                <Bubble><Fit w={19} h={24} size={18}>10</Fit></Bubble>
              </Message>
              <Reactions><ReplyPlus /><SmilePlus /></Reactions>
              <Notices>
                {NOTICES.map(([text, w]) => <Fit key={text} w={w} size={14}>{text}</Fit>)}
              </Notices>
            </ChatLog>
            <Track $end><Thumb /></Track>
          </Split>
          <WhoBand>
            <WhoIcon />
            <Fit w={191} size={15} up={0.5}>Who can see your messages?</Fit>
          </WhoBand>
          <Composer>
            <ToRow>
              <Fit w={19} size={15} up={1}>To:</Fit>
              <Recipient><Fit w={96} size={14} up={0.5}>Dr Deepak Raut</Fit><ChevronDown w={10} c="#fff" /></Recipient>
              <Fit w={109} size={15} up={1} color="#e02828">(direct message)</Fit>
            </ToRow>
            <Placeholder><Fit w={249} h={26} size={18.5}>Message QA Class G6 @ 2026</Fit></Placeholder>
            <ComposerTools>
              <ToolSlot><FormatIcon /></ToolSlot>
              <ToolSlot><SmileIcon /></ToolSlot>
              <ToolSlot><FileIcon /></ToolSlot>
              <ToolSlot $w={35}><ShotIcon /></ToolSlot>
              <ChevronDown />
              <SendButton><SendIcon /></SendButton>
            </ComposerTools>
          </Composer>
        </Sidebar>
      </Body>

      <Taskbar>
        <Weather>
          <HazeIcon />
          <Stack>
            <Fit w={30} size={15} up={1.5}>19°C</Fit>
            <Fit w={33} size={15} up={1.5} color="#d0cfd2">Haze</Fit>
          </Stack>
        </Weather>
        <Start><WindowsLogo /></Start>
        <SearchPill>
          <Glass s={18} c="#e8e8ea" sw={1.8} />
          <SearchLabel><Fit w={51} size={16}>Search</Fit></SearchLabel>
          <SearchArt><DickensArt /></SearchArt>
        </SearchPill>
        <Apps>
          {APPS.map((a, i) => (
            <AppSlot key={i}>
              <AppFace $active={a.active}>{a.icon}</AppFace>
              {a.bar && <Indicator $w={a.bar} $bg={a.barBg} />}
            </AppSlot>
          ))}
        </Apps>
        <Tray>
          <TraySlot $w={40}>
            <svg width="14" height="9" viewBox="0 0 14 9" fill="none" stroke="#fff" strokeWidth="1.700" strokeLinecap="round"><path d="m1 7.500 6-6 6 6" /></svg>
          </TraySlot>
          <TraySlot $w={40}><TrayMic /></TraySlot>
          <TraySlot $w={56}>
            <Stack $align="center"><Fit w={28} size={15} up={1}>ENG</Fit><Fit w={14} size={15} up={1}>IN</Fit></Stack>
          </TraySlot>
          <TraySlot $w={38}><Wifi /></TraySlot>
          <TraySlot $w={22}><Volume /></TraySlot>
          <TraySlot $w={37}><Battery /></TraySlot>
          <TraySlot $w={100}>
            <Stack $align="flex-end"><Fit w={35} size={15} up={1.5}>20:11</Fit><Fit w={77} size={15} up={1.5}>07-02-2024</Fit></Stack>
          </TraySlot>
          <TraySlot $w={19}><BellZ /></TraySlot>
        </Tray>
      </Taskbar>
    </Screen>
  );
}

const Upright = styled.span`
  font-style: normal;
  font-size: 57px;
`;
